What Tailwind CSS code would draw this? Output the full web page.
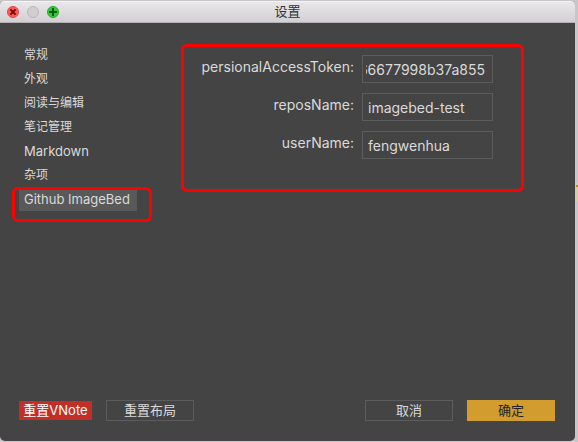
<!DOCTYPE html>
<html lang="zh-CN">
<head>
<meta charset="utf-8">
<meta name="viewport" content="width=device-width, initial-scale=1">
<title>设置</title>
<script src="https://cdn.jsdelivr.net/npm/@tailwindcss/browser@4"></script>
</head>
<body class="relative flex h-screen overflow-hidden bg-[#c8c6c8] pt-px pr-[3px] pb-px font-[Inter,'Noto_Sans_CJK_SC',sans-serif] text-[13px] text-[#dadada]">
<div class="absolute top-[183px] right-0 h-[18px] w-0.5 bg-[#d5cba8]"><div class="mt-0.5 h-0.5 bg-[#b58a20]"></div></div>
<div class="flex min-w-0 grow flex-col overflow-hidden rounded-t-[4px] rounded-b-[5px] bg-[#444444]">
  <header class="grid h-[22px] shrink-0 grid-cols-[1fr_auto_1fr] items-center border-t border-b border-t-[#f4f3f4] border-b-[#b3b1b3] bg-linear-to-b from-[#e9e7e9] to-[#d2d0d2] text-[#333333]">
    <div class="flex gap-2 pl-[7px]">
      <button aria-label="关闭" class="size-3"><svg viewBox="0 0 12 12" class="size-3"><circle cx="6" cy="6" r="5.5" fill="#fc5b57" stroke="#df4744"/><path d="M3.4 3.4l5.2 5.2M8.6 3.4L3.4 8.6" stroke="#7c0707" stroke-width="2"/></svg></button>
      <button aria-label="最小化" class="size-3"><svg viewBox="0 0 12 12" class="size-3"><circle cx="6" cy="6" r="5.5" fill="#d0ced0" stroke="#b9b7b9"/></svg></button>
      <button aria-label="缩放" class="size-3"><svg viewBox="0 0 12 12" class="size-3"><circle cx="6" cy="6" r="5.5" fill="#34c83c" stroke="#24ac2b"/><path d="M6 2v8M2 6h8" stroke="#0b5a08" stroke-width="2"/></svg></button>
    </div>
    <h1>设置</h1>
  </header>
  <main class="flex grow items-start justify-between pt-5 pr-[51px] pl-[19px]">
    <nav class="relative flex w-[118px] flex-col text-xs leading-6">
      <a href="#" class="px-[5px]">常规</a>
      <a href="#" class="px-[5px]">外观</a>
      <a href="#" class="px-[5px]">阅读与编辑</a>
      <a href="#" class="px-[5px]">笔记管理</a>
      <a href="#" class="px-[5px] text-[13px] leading-6">Markdown</a>
      <a href="#" class="px-[5px]">杂项</a>
      <a href="#" aria-current="page" class="bg-[#595959] px-[5px] text-[13px] leading-6 whitespace-nowrap">Github ImageBed</a>
      <div class="pointer-events-none absolute -right-[15px] -bottom-[11px] -left-[7px] h-[35px] rounded-md border-3 border-[#ff0000]"></div>
    </nav>
    <form class="mt-px grid h-[148px] w-[343px] grid-cols-[1fr_131px] content-start gap-x-2 gap-y-2.5 rounded-md border-3 border-[#ff0000] pt-2 pr-7 text-sm">
      <label for="token" class="text-right leading-6">persionalAccessToken:</label>
      <input id="token" dir="rtl" value="b66677998b37a855" class="h-7 w-full border border-[#5c5c5c] pr-[7px] pl-[3px]">
      <label for="repo" class="text-right leading-6">reposName:</label>
      <input id="repo" value="imagebed-test" class="h-7 w-full border border-[#5c5c5c] px-[5px]">
      <label for="user" class="text-right leading-6">userName:</label>
      <input id="user" value="fengwenhua" class="h-7 w-full border border-[#5c5c5c] px-[5px]">
    </form>
  </main>
  <footer class="flex items-center gap-3.5 pr-5 pb-5 pl-[19px] leading-[19px]">
    <button class="h-[19px] w-[73px] bg-[#c32f26] whitespace-nowrap text-white">重置VNote</button>
    <button class="h-[21px] w-[88px] border border-[#5c5c5c]">重置布局</button>
    <button class="ml-auto h-[21px] w-[88px] border border-[#5c5c5c]">取消</button>
    <button class="h-[21px] w-[88px] bg-[#d29c2e] text-[#222222]">确定</button>
  </footer>
</div>
</body>
</html>
